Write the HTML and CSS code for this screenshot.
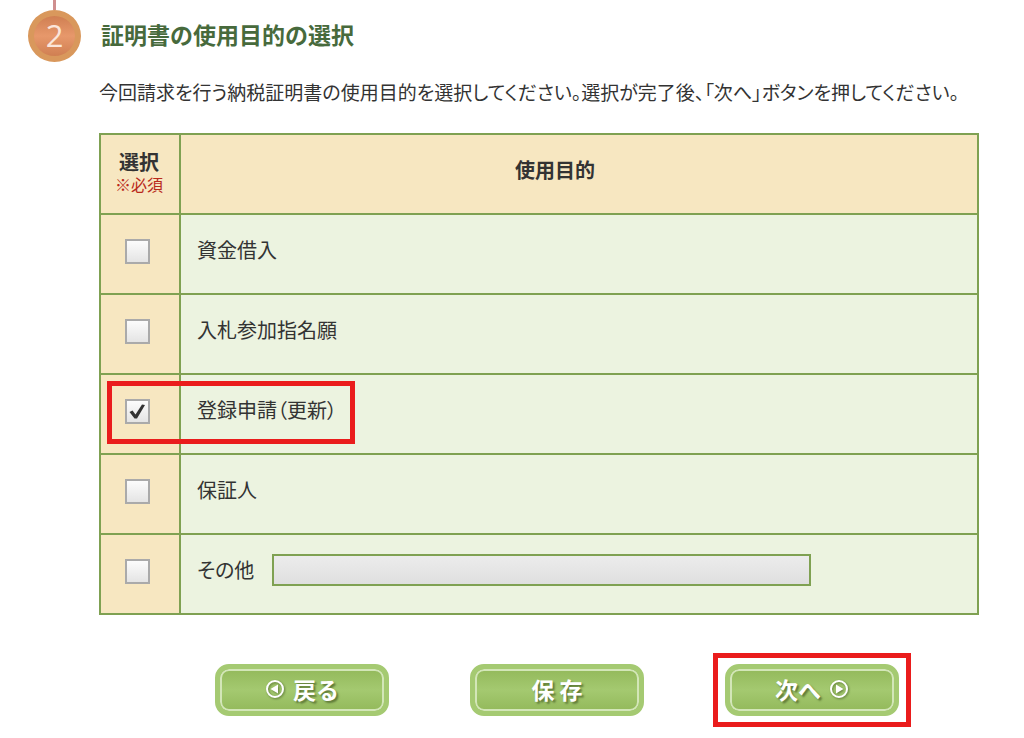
FILE: index.html
```html
<!DOCTYPE html>
<html lang="ja">
<head>
    <meta charset="UTF-8">
    <meta name="viewport" content="width=device-width, initial-scale=1.0">
    <title>証明書の使用目的の選択</title>
    <link rel="stylesheet" href="styles.css">
</head>
<body>

    <form class="step" action="#" method="post">
        <!-- Step number and the line coming from the previous step -->
        <div class="step-mark">
            <span class="step-number">2</span>
        </div>
        <h2 class="step-title">証明書の使用目的の選択</h2>

        <div class="step-body">
            <p class="lead">今回請求を行う納税証明書の使用目的を選択してください。選択が完了後、「次へ」ボタンを押してください。</p>

            <table class="purpose">
                <thead>
                    <tr>
                        <th class="col-check" scope="col">選択<span class="required">※必須</span></th>
                        <th class="col-purpose" scope="col">使用目的</th>
                    </tr>
                </thead>
                <tbody>
                    <tr>
                        <td class="col-check"><input type="checkbox" class="check" id="loan" name="purpose"></td>
                        <td><label for="loan">資金借入</label></td>
                    </tr>
                    <tr>
                        <td class="col-check"><input type="checkbox" class="check" id="bid" name="purpose"></td>
                        <td><label for="bid">入札参加指名願</label></td>
                    </tr>
                    <tr>
                        <td class="col-check marked"><input type="checkbox" class="check" id="renewal" name="purpose" checked></td>
                        <td><label for="renewal">登録申請（更新）</label></td>
                    </tr>
                    <tr>
                        <td class="col-check"><input type="checkbox" class="check" id="guarantor" name="purpose"></td>
                        <td><label for="guarantor">保証人</label></td>
                    </tr>
                    <tr>
                        <td class="col-check"><input type="checkbox" class="check" id="other" name="purpose"></td>
                        <td>
                            <div class="other">
                                <label for="other">その他</label>
                                <input type="text" class="other-text" name="other-text" aria-label="その他" disabled>
                            </div>
                        </td>
                    </tr>
                </tbody>
            </table>

            <div class="buttons">
                <button type="button" class="btn">
                    <svg class="arrow" viewBox="0 0 20 20" aria-hidden="true">
                        <circle cx="10" cy="10" r="8" fill="none" stroke="#fff" stroke-width="2"/>
                        <path d="M13 5.500v9L5.500 10z" fill="#fff"/>
                    </svg>
                    <span>戻る</span>
                </button>
                <button type="button" class="btn"><span>保 存</span></button>
                <div class="next">
                    <button type="submit" class="btn">
                        <span>次へ</span>
                        <svg class="arrow" viewBox="0 0 20 20" aria-hidden="true">
                            <circle cx="10" cy="10" r="8" fill="none" stroke="#fff" stroke-width="2"/>
                            <path d="M7 5.500v9l7.500-4.500z" fill="#fff"/>
                        </svg>
                    </button>
                </div>
            </div>
        </div>
    </form>

</body>
</html>
```
FILE: styles.css
```css
*, *::before, *::after {
    box-sizing: border-box;
}
body {
    margin: 0;
    background-color: #fff;
    color: #333;
    font-family: "Noto Sans CJK JP", sans-serif;
    font-size: 19px;
    line-height: 24px;
    font-feature-settings: "palt";
}
.step {
    display: grid;
    grid-template-columns: 53px 1fr;
    column-gap: 18px;
    padding: 0 45px 22px 28px;
}

/* Step heading */
.step-mark {
    display: flex;
    flex-direction: column;
    align-items: center;
}
.step-mark::before {
    content: "";
    width: 3px;
    height: 10px;
    background-color: #cf8f8f;
}
.step-number {
    width: 53px;
    height: 52px;
    border: 6px solid #d9985c;
    border-radius: 50%;
    background: linear-gradient(#d07f52, #e7986b 50%, #d07f52);
    color: #fbe6da;
    font-family: "Open Sans", sans-serif;
    font-size: 31px;
    line-height: 38px;
    text-align: center;
}
.step-title {
    margin: 0;
    padding: 22px 0 0 2px;
    color: #476a3c;
    font-size: 23px;
    font-weight: 700;
    line-height: 24px;
    font-feature-settings: normal;
}
.step-body {
    grid-column: 2;
}
.lead {
    margin: 18px 0 29px;
}

/* Purpose table */
.purpose {
    width: 100%;
    border-collapse: collapse;
    background-color: #ecf3e0;
    font-size: 20px;
}
.purpose th, .purpose td {
    height: 80px;
    padding: 0 16px 8px;
    border: 2px solid #7fa152;
    text-align: left;
}
.purpose th {
    background-color: #f7e7c1;
    font-weight: 700;
    text-align: center;
}
.purpose .col-purpose {
    padding-right: 64px;
}
.purpose .col-check {
    width: 80px;
    padding: 0 6px 8px 0;
    background-color: #f7e7c1;
    text-align: center;
}
.purpose th.col-check {
    padding: 0 2px 4px 0;
}
.required {
    display: block;
    color: #b92a1c;
    font-size: 16px;
    font-weight: 400;
    line-height: 20px;
}
.check {
    appearance: none;
    display: inline-block;
    width: 25px;
    height: 25px;
    margin: 0;
    border: 2px solid #aaa;
    background: linear-gradient(#fcfcfc, #e4e4e4);
    vertical-align: middle;
}
.check:checked::before {
    content: "";
    display: block;
    width: 21px;
    height: 21px;
    background-color: #333;
    clip-path: path("M3 11.500L6 10l3 4L15.500 4l3 .5L10.500 18H8z");
}
.other {
    display: flex;
    align-items: center;
    gap: 18px;
}
.other-text {
    width: 539px;
    height: 32px;
    border: 2px solid #7fa152;
    background: linear-gradient(#ececec, #dfdfdf);
}

/* Red frames round the parts to use */
.marked {
    position: relative;
}
.marked::after {
    content: "";
    position: absolute;
    top: 6px;
    left: 6px;
    width: 248px;
    height: 63px;
    border: 5px solid #ea1c1c;
}
.next {
    position: relative;
}
.next::after {
    content: "";
    position: absolute;
    inset: -11px -12px;
    border: 5px solid #ea1c1c;
    pointer-events: none;
}

/* Buttons */
.buttons {
    display: flex;
    justify-content: center;
    gap: 81px;
    margin-top: 49px;
    padding-left: 36px;
}
.btn {
    display: flex;
    align-items: center;
    justify-content: center;
    gap: 8px;
    width: 174px;
    height: 52px;
    padding: 0 0 2px;
    border: 5px solid #a5ca72;
    border-radius: 14px;
    background: linear-gradient(#93b95b, #a4c970 50%, #93b95b);
    box-shadow: inset 0 0 0 2px #d3e6b8;
    color: #fff;
    font: bold 23px/24px "Noto Sans CJK JP", sans-serif;
    text-shadow: 2px 2px 2px #5f7a38;
    cursor: pointer;
}
.arrow {
    width: 20px;
    height: 20px;
    filter: drop-shadow(1px 1px 1px #5f7a38);
}
```
